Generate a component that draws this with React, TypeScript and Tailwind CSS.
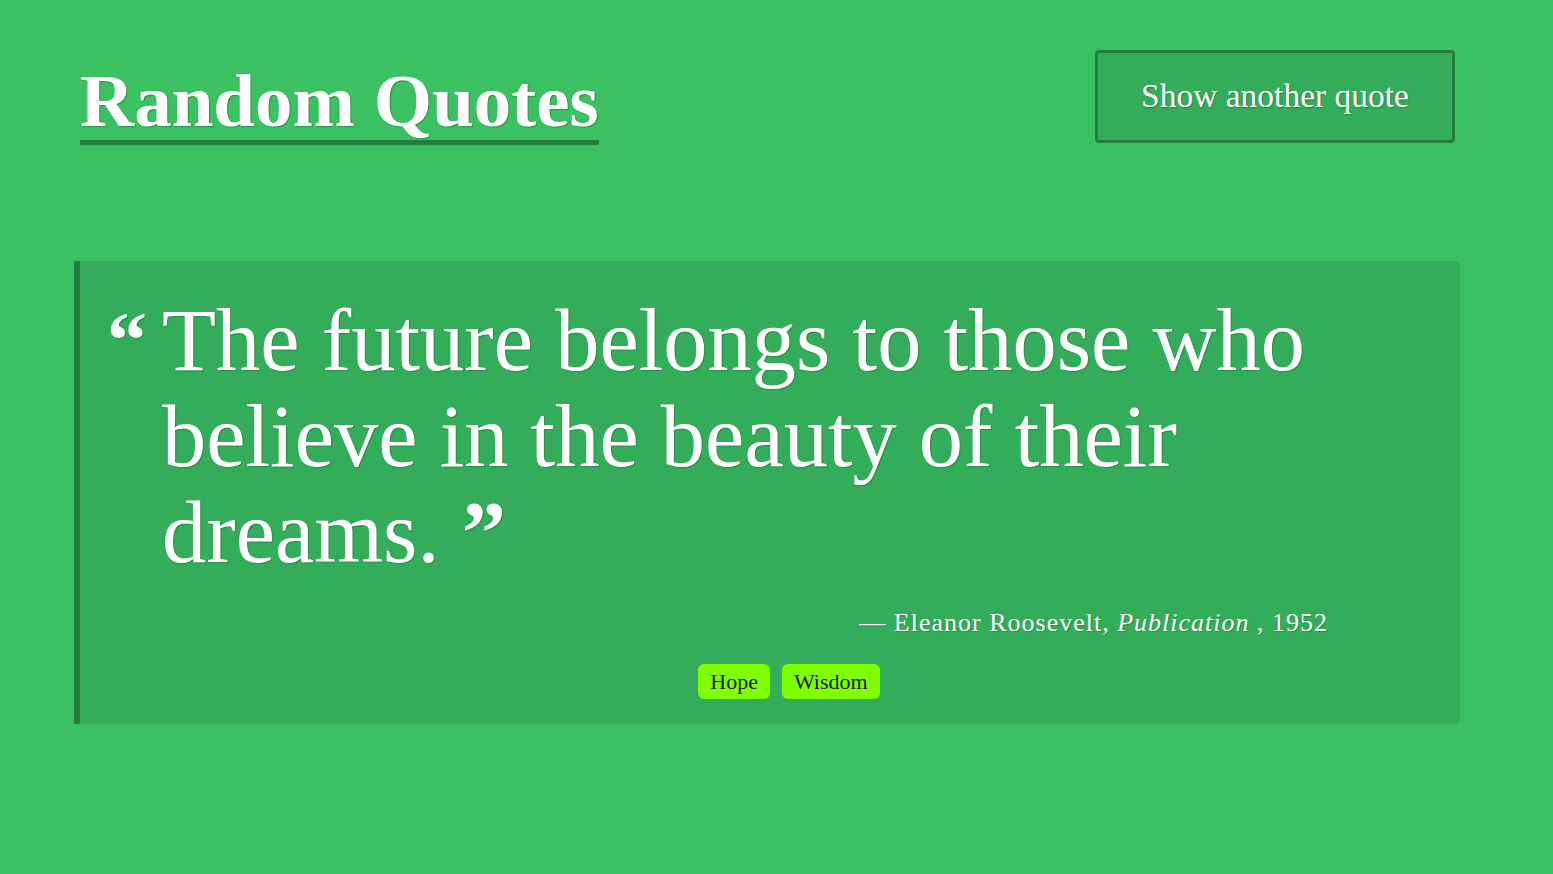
import React from "react";

export default function App() {
  const serif = "font-['Liberation_Serif','DejaVu_Serif',serif]";
  return (
    <div className={`min-h-[874px] w-full bg-[#3bc161] ${serif} text-white`}>
      <div className="flex items-start justify-between pl-[80px] pr-[98px] pt-[50px]">
        <h1 className="mt-[12px] border-b-[5px] border-[#267c3e] text-[75px] font-bold leading-[78px] [text-shadow:1px_1px_1px_rgba(0,0,0,0.25)]">
          Random Quotes
        </h1>
        <button className="flex h-[93px] w-[360px] items-center justify-center rounded-[4px] border-[3px] border-[#267c3e] bg-[#34ad5a] text-[33.5px] [text-shadow:1px_1px_1px_rgba(0,0,0,0.25)]">
          Show another quote
        </button>
      </div>

      <div className="ml-[74px] mr-[93px] mt-[116px] flex rounded-r-[5px] border-l-[6px] border-[#267c3e] bg-[#34ad5a] pb-[25px] pl-[27px] pr-[44px] pt-[31px] [text-shadow:1px_1px_1px_rgba(0,0,0,0.2)]">
        <span className="w-[55px] shrink-0 text-[80px] font-bold leading-[96px]">“</span>
        <div className="min-w-0 flex-1">
          <p className="text-[88.5px] leading-[96px]">
            The future belongs to those who believe in the beauty of their{" "}
            <span className="whitespace-nowrap">
              dreams. <span className="font-bold">”</span>
            </span>
          </p>
          <div className="mt-[23px] flex justify-end pr-[88px] text-[26px] tracking-[1px]">
            <span>
              — Eleanor Roosevelt, <i>Publication</i> , 1952
            </span>
          </div>
          <div className="mt-[22px] flex justify-center gap-[12px] [text-shadow:none]">
            <span className="flex h-[35px] items-center rounded-[6px] bg-[#7fff00] px-[12px] text-[22px] text-[#1a1a1a]">Hope</span>
            <span className="flex h-[35px] items-center rounded-[6px] bg-[#7fff00] px-[12px] text-[22px] text-[#1a1a1a]">Wisdom</span>
          </div>
        </div>
      </div>
    </div>
  );
}
